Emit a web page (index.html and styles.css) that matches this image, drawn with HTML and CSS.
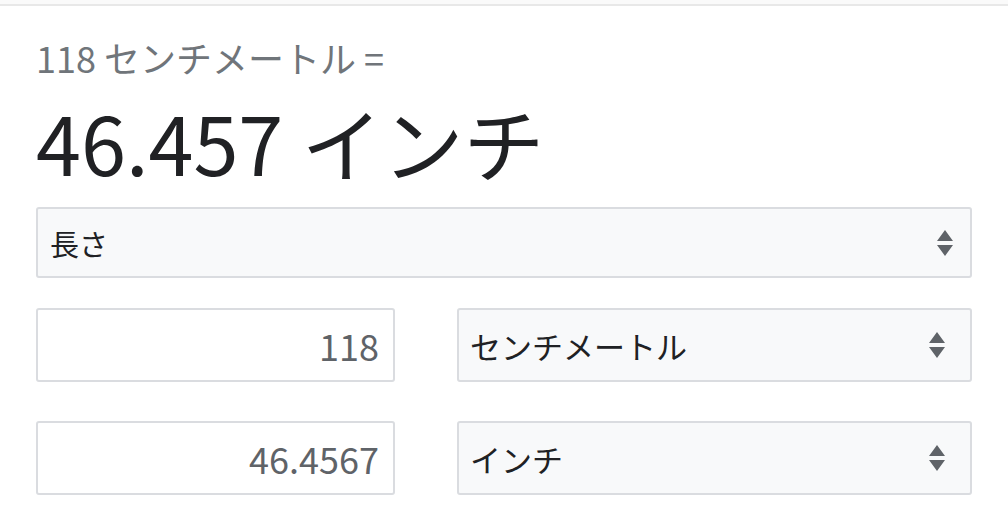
FILE: index.html
```html
<!DOCTYPE html>
<html lang="ja">
<head>
<meta charset="utf-8">
<link rel="stylesheet" href="styles.css">
</head>
<body>
<div class="topbar"></div>
<main class="conv">
  <div class="eq">118 センチメートル =</div>
  <div class="result">46.457 インチ</div>
  <div class="select wide">
    <span>長さ</span>
    <svg class="arrows" width="16" height="26" viewBox="0 0 16 26"><path d="M8 0 L16 11 L0 11 Z M0 15 L16 15 L8 26 Z" fill="#5f6368"/></svg>
  </div>
  <div class="row r1">
    <div class="input">118</div>
    <div class="select unit">
      <span>センチメートル</span>
      <svg class="arrows" width="16" height="26" viewBox="0 0 16 26"><path d="M8 0 L16 11 L0 11 Z M0 15 L16 15 L8 26 Z" fill="#5f6368"/></svg>
    </div>
  </div>
  <div class="row r2">
    <div class="input">46.4567</div>
    <div class="select unit">
      <span>インチ</span>
      <svg class="arrows" width="16" height="26" viewBox="0 0 16 26"><path d="M8 0 L16 11 L0 11 Z M0 15 L16 15 L8 26 Z" fill="#5f6368"/></svg>
    </div>
  </div>
</main>
</body>
</html>
```

FILE: styles.css
```css
html, body {
  margin: 0;
  padding: 0;
  background: #fff;
}
body {
  font-family: "Noto Sans CJK JP", "Noto Sans", sans-serif;
  width: 1008px;
  height: 522px;
  overflow: hidden;
}
.topbar {
  height: 4px;
  background: #fafafa;
  border-bottom: 2px solid #e8e8e8;
}
.conv {
  padding: 0 36px;
  display: flex;
  flex-direction: column;
}
.eq {
  margin-top: 31px;
  font-size: 36px;
  line-height: 40px;
  height: 40px;
  color: #70757a;
  white-space: nowrap;
}
.result {
  margin-top: 14px;
  font-size: 81px;
  line-height: 100px;
  height: 100px;
  color: #202124;
  white-space: nowrap;
}
.select {
  box-sizing: border-box;
  background: #f8f9fa;
  border: 2px solid #dadce0;
  border-radius: 3px;
  display: flex;
  align-items: center;
  justify-content: space-between;
  color: #202124;
}
.wide {
  margin-top: 16px;
  height: 71px;
  font-size: 29px;
  padding: 0 17px 0 12px;
}
.row {
  display: flex;
  justify-content: space-between;
  height: 74px;
}
.r1 { margin-top: 30px; }
.r2 { margin-top: 39px; }
.input {
  box-sizing: border-box;
  width: 359px;
  border: 2px solid #dadce0;
  border-radius: 3px;
  background: #fff;
  display: flex;
  align-items: center;
  justify-content: flex-end;
  padding-right: 14px;
  font-size: 36px;
  color: #5f6368;
}
.unit {
  width: 515px;
  font-size: 31px;
  padding: 0 25px 0 11px;
}
.arrows {
  display: block;
}
```
